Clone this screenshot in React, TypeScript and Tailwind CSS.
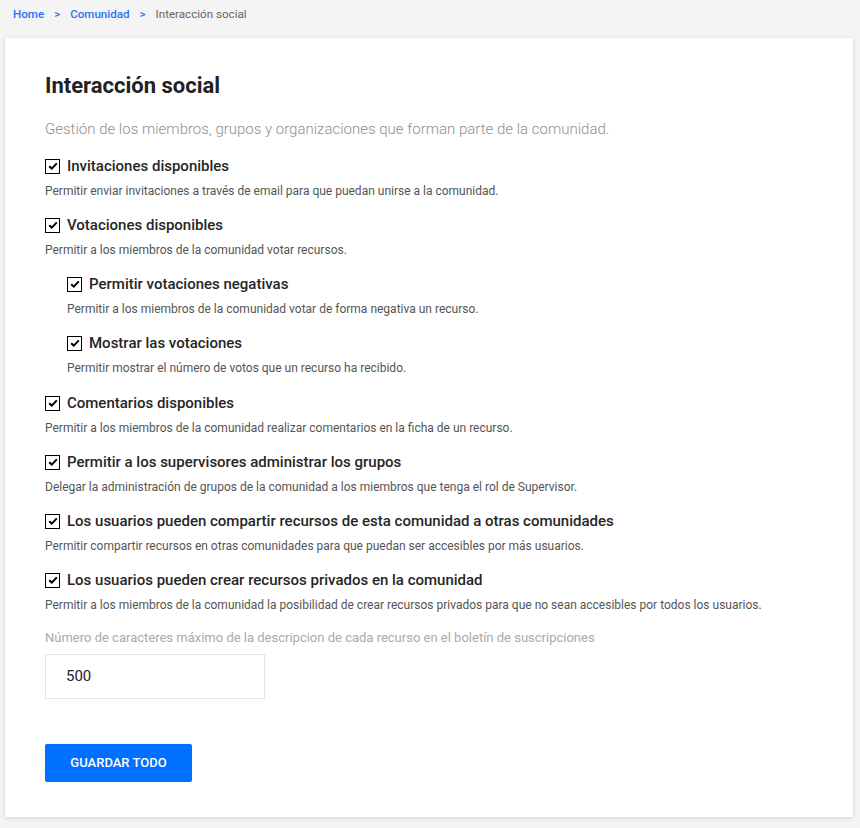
import React from 'react'

interface Option {
  label: string
  desc: string
  nested?: boolean
  extra?: boolean
}

const options: Option[] = [
  { label: 'Invitaciones disponibles', desc: 'Permitir enviar invitaciones a través de email para que puedan unirse a la comunidad.' },
  { label: 'Votaciones disponibles', desc: 'Permitir a los miembros de la comunidad votar recursos.' },
  { label: 'Permitir votaciones negativas', desc: 'Permitir a los miembros de la comunidad votar de forma negativa un recurso.', nested: true },
  { label: 'Mostrar las votaciones', desc: 'Permitir mostrar el número de votos que un recurso ha recibido.', nested: true },
  { label: 'Comentarios disponibles', desc: 'Permitir a los miembros de la comunidad realizar comentarios en la ficha de un recurso.', extra: true },
  { label: 'Permitir a los supervisores administrar los grupos', desc: 'Delegar la administración de grupos de la comunidad a los miembros que tenga el rol de Supervisor.' },
  { label: 'Los usuarios pueden compartir recursos de esta comunidad a otras comunidades', desc: 'Permitir compartir recursos en otras comunidades para que puedan ser accesibles por más usuarios.' },
  { label: 'Los usuarios pueden crear recursos privados en la comunidad', desc: 'Permitir a los miembros de la comunidad la posibilidad de crear recursos privados para que no sean accesibles por todos los usuarios.' },
]

function CheckBox() {
  return (
    <span className="w-[15px] h-[15px] flex-shrink-0 border-[1.5px] border-black bg-white flex items-center justify-center">
      <svg width="10" height="8" viewBox="0 0 10 8">
        <path d="M1.2 4.2 L3.8 6.6 L8.8 1.4" fill="none" stroke="#000" strokeWidth="2" />
      </svg>
    </span>
  )
}

export default function App() {
  return (
    <div className="min-h-[828px] bg-[#f4f4f4] pb-[11px]" style={{ fontFamily: 'Roboto, "Noto Sans", sans-serif' }}>
      {/* Breadcrumb */}
      <div className="flex items-center h-[30px] pl-[13px] text-[11.6px] font-medium">
        <span className="text-[#2a72f5]">Home</span>
        <span className="text-[#2a72f5] mx-[10px]">&gt;</span>
        <span className="text-[#2a72f5]">Comunidad</span>
        <span className="text-[#2a72f5] mx-[10px]">&gt;</span>
        <span className="text-[#666] font-normal">Interacción social</span>
      </div>

      {/* Card */}
      <div className="ml-[5px] mt-[8px] w-[848px] bg-white shadow-[0_1px_4px_rgba(0,0,0,0.15)] pl-[40px] pr-[20px] pt-[34px] pb-[35px]">
        <h1 className="text-[22px] leading-[28px] font-bold text-[#222]">Interacción social</h1>
        <p className="mt-[19px] text-[15px] leading-[20px] font-light text-[#8f8f8f]">
          Gestión de los miembros, grupos y organizaciones que forman parte de la comunidad.
        </p>

        <div className="flex flex-col gap-[16px] mt-[17px]">
          {options.map((o, i) => (
            <div key={i} className={`${o.nested ? 'pl-[22px]' : ''} ${o.extra ? 'mt-[1px]' : ''}`}>
              <div className="flex items-center gap-[7px] h-[20px]">
                <CheckBox />
                <span className="text-[15px] leading-[20px] font-medium text-[#262626]">{o.label}</span>
              </div>
              <p className="mt-[7px] text-[12px] leading-[16px] text-[#555]">{o.desc}</p>
            </div>
          ))}
        </div>

        <label className="block mt-[16px] text-[13px] leading-[18px] text-[#aaa]">
          Número de caracteres máximo de la descripcion de cada recurso en el boletín de suscripciones
        </label>
        <div className="mt-[7px] w-[220px] h-[45px] border border-[#e6e6e6] flex items-center pl-[20px] text-[15px] text-[#222]">
          500
        </div>

        <button className="mt-[45px] w-[147px] h-[38px] rounded-[2px] bg-[#0070ff] text-white text-[13px] font-medium uppercase">
          Guardar todo
        </button>
      </div>
    </div>
  )
}
